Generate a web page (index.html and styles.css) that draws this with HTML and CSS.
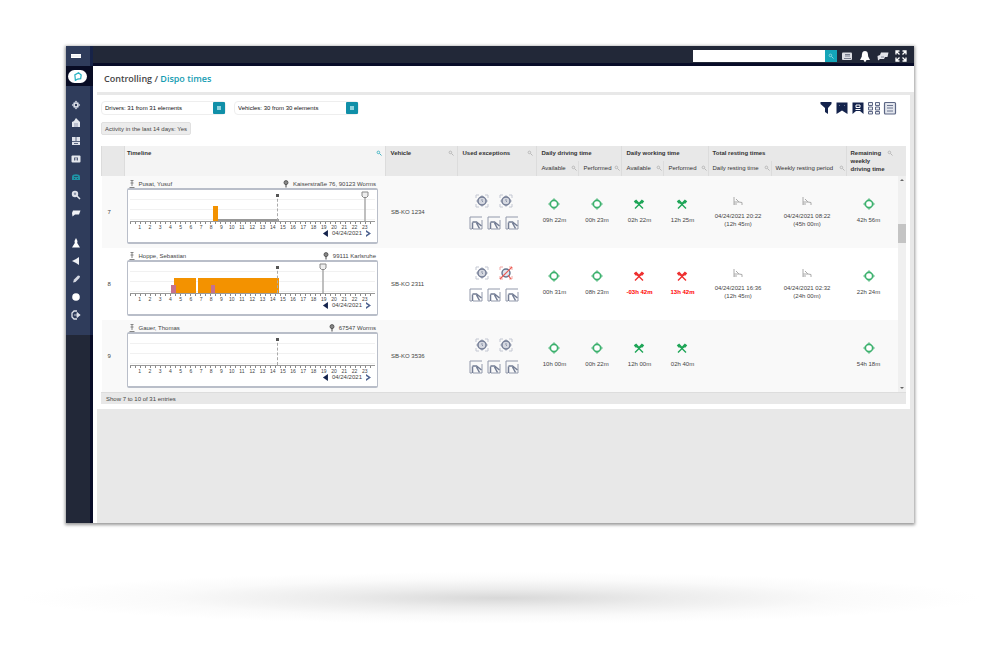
FILE: index.html
```html
<!DOCTYPE html>
<html lang="en">
<head>
<meta charset="utf-8">
<title>Controlling / Dispo times</title>
<link rel="stylesheet" href="styles.css">
</head>
<body>
<svg class="defs" aria-hidden="true">
  <symbol id="wheel" viewBox="0 0 12 12"><path d="M6 0 12 6 6 12 0 6Z" fill="currentColor" opacity=".6"/><circle cx="6" cy="6" r="3.5" fill="#fff" stroke="currentColor" stroke-width="1.4" stroke-opacity=".8"/></symbol>
  <symbol id="work" viewBox="0 0 12 12"><path d="M2 10.5 8.5 4M10 10.5 3.5 4" fill="none" stroke="currentColor" stroke-width="1.4"/><path d="M.8 3.2 3.2 1.6 6 4.4 8.800 1.600 11.200 3.200 9.600 5.400 7.600 5.600 6 7.400 4.400 5.600 2.400 5.400Z" fill="currentColor"/></symbol>
  <symbol id="bed" viewBox="0 0 12 10"><path d="M2 1v8M2 6h5M4 3l3 3 3 .5V9M2 8h3" fill="none" stroke="currentColor"/></symbol>
  <symbol id="exc" viewBox="0 0 14 14"><path d="M1 4V1h3M10 1h3v3M13 10v3h-3M4 13H1v-3" fill="none" stroke="#c3c7d2"/><path d="M7 1 13 7 7 13 1 7Z" fill="#b4bac8"/><circle cx="7" cy="7" r="4" fill="#d5d8e0" stroke="#757e96" stroke-width="1.4"/><path d="M7 5V7l1 1" fill="none" stroke="#8d95a9"/></symbol>
  <symbol id="excred" viewBox="0 0 14 14"><path d="M1 4V1h3M10 1h3v3M13 10v3h-3M4 13H1v-3" fill="none" stroke="#f2a9a5"/><circle cx="7" cy="7" r="4" fill="#dfe8f0" stroke="#66738c" stroke-width="1.4"/><path d="M1 13 13 1M9 9l3 4" stroke="#ed5a52" stroke-width="1.2"/></symbol>
  <symbol id="split" viewBox="0 0 14 14"><path d="M13 1H1v12h2M4 13h9V4" fill="none" stroke="#9299ab"/><path d="M3.5 13V6.500M3.500 6h4l5 4M7.500 7l3 5.500" fill="none" stroke="#737d94" stroke-width="1.500"/></symbol>
  <symbol id="search" viewBox="0 0 6 6"><circle cx="2.400" cy="2.400" r="1.300" fill="none" stroke="currentColor" stroke-width=".7"/><path d="M3.500 3.500 5.500 5.500" stroke="currentColor" stroke-width=".8"/></symbol>
  <symbol id="person" viewBox="0 0 6 8"><path d="M1.500.500h3M3 1v5M1.500 3h3M.500 7.500h5" fill="none" stroke="#777" stroke-width=".9"/></symbol>
  <symbol id="place" viewBox="0 0 6 8"><path d="M3 7.500V4" stroke="#444"/><circle cx="3" cy="2.600" r="2" fill="#888" stroke="#444" stroke-width=".8"/></symbol>
  <symbol id="flag" viewBox="0 0 8 30"><path d="M4 6v24" stroke="#aaa" stroke-width="1.500"/><path d="M1 1h6v4L5.500 6.500h-3L1 5Z" fill="#eee" stroke="#888"/></symbol>
</svg>

<div class="window">
  <nav class="side" aria-label="Main">
    <div class="side-main">
      <button class="menu" aria-label="Menu"><svg viewBox="0 0 10 6"><path d="M0 1h10v4H0z" fill="#fff"/><path d="M0 3h10" stroke="#ccd1dd" stroke-width=".6"/></svg></button>
      <a class="home" href="#" aria-label="Home"><svg viewBox="0 0 18 12"><path d="M7 9.500 6.500 4.500 10 2.500l2.500 2-.5 3.500L9 8.500Z" fill="none" stroke="#2bb3c4" stroke-width="1.200"/></svg></a>
      <div class="links">
        <a href="#" aria-label="Map"><svg viewBox="0 0 10 10"><path d="M5 .5 9.200 5 5 9.500.8 5Z" fill="#d8dce6"/><circle cx="5" cy="5" r="3" fill="#dfe2ea" stroke="#9aa3b8"/><circle cx="5" cy="5" r="1.200" fill="#2f3c5b"/></svg></a>
        <a href="#" aria-label="Depot"><svg viewBox="0 0 10 10"><path d="M5 0 8 3l1 1v5H1V4l2-1Z" fill="#e4e7ee"/><path d="M3 6h4M3 8h4" stroke="#7f89a2" stroke-width=".8"/></svg></a>
        <a href="#" aria-label="Dashboard"><svg viewBox="0 0 10 10"><path d="M1 1h8v8H1z" fill="#dfe2ea"/><path d="M1 5.500h8M5 1v4M3 7.500h4" stroke="#596580"/></svg></a>
        <a href="#" aria-label="Cards"><svg viewBox="0 0 10 10"><rect x=".5" y="1.500" width="9" height="7" rx="1" fill="#e4e7ee"/><path d="M3 3.500h4v3H3z" fill="#56617d"/><path d="M5 4v3" stroke="#fff"/></svg></a>
        <a class="active" href="#" aria-label="Controlling"><svg viewBox="0 0 10 10"><path d="M1 4.500C1 1.500 9 1.500 9 4.500V8H1Z" fill="currentColor"/><path d="M3 4.500h4M3 6.500h1M6 6.500h1" stroke="#2f3c5b" stroke-width=".8"/></svg></a>
        <a href="#" aria-label="Search"><svg viewBox="0 0 10 10"><circle cx="4" cy="4" r="3.200" fill="#dfe2ea"/><circle cx="4" cy="3.800" r="1.200" fill="#8b94aa"/><path d="m6 6 3 3" stroke="#e4e7ee" stroke-width="1.500"/></svg></a>
        <a href="#" aria-label="Messages"><svg viewBox="0 0 10 10"><path d="M2 2.500h7.500L8 6.500H4L1.500 8.500 1 5Z" fill="#f1f2f6"/></svg></a>
      </div>
      <div class="links">
        <a href="#" aria-label="Users"><svg viewBox="0 0 10 10"><path d="M5 0 6.500 3 6.200 5 9 9.500H1L3.800 5 3.500 3Z" fill="#fff"/></svg></a>
        <a href="#" aria-label="Announcements"><svg viewBox="0 0 10 10"><path d="M8 1v8L5 7 1 5l4-2Z" fill="#eef0f5"/></svg></a>
        <a href="#" aria-label="Tools"><svg viewBox="0 0 10 10"><path d="m2 8.500 1-3 4-4 2 .5-.5 2-4 4Z" fill="#d5d9e3"/></svg></a>
        <a href="#" aria-label="Help"><svg viewBox="0 0 10 10"><circle cx="5" cy="5" r="3.800" fill="#fff"/></svg></a>
        <a href="#" aria-label="Log out"><svg viewBox="0 0 10 10"><path d="M6 1H3L1 3v4l2 2h3" fill="none" stroke="#dfe2ea" stroke-width="1.300"/><path d="M3 5h4M6 2.500 9.200 5 6 7.500Z" fill="#dfe2ea" stroke="#dfe2ea" stroke-width=".8"/></svg></a>
      </div>
    </div>
  </nav>

  <div class="content">
    <header class="top">
      <form class="find"><input type="search" aria-label="Search"><button type="button" aria-label="Start search"><svg viewBox="0 0 6 6"><use href="#search"/></svg></button></form>
      <button aria-label="News"><svg viewBox="0 0 12 12"><rect x="1" y="2.500" width="10" height="7.500" rx="1" fill="#dcdee4"/><path d="M4 4.500h5M4 6h5M3 8.500h7" stroke="#777d8e"/></svg></button>
      <button aria-label="Notifications"><svg viewBox="0 0 12 12"><path d="M6 1c3 0 3 3 3.200 5.500L11 10H1l1.800-3.500C3 4 3 1 6 1Z" fill="#fff"/><circle cx="6" cy="10.500" r="1.200" fill="#fff"/></svg></button>
      <button aria-label="Messages"><svg viewBox="0 0 12 12"><path d="M4 2.500h7.500L10.500 7H8l-1 2H3L1 10.500.5 6 3 5Z" fill="#e3e5ea"/><path d="M4 7h3" stroke="#7c8294"/></svg></button>
      <button aria-label="Full screen"><svg viewBox="0 0 12 12"><path d="M1 4.500V1h3.500M7.500 1H11v3.500M11 7.500V11H7.500M4.500 11H1V7.500M1 1l3.500 3.500M11 1 7.500 4.500M11 11 7.500 7.500M1 11l3.500-3.500" fill="none" stroke="#fff" stroke-width="1.300"/></svg></button>
    </header>
    <main>
      <h1>Controlling / <a href="#">Dispo times</a></h1>
      <section class="card">
        <div class="tools">
          <div class="pick"><select aria-label="Drivers"><option>Drivers: 31 from 31 elements</option></select><span class="drop"></span></div>
          <div class="pick"><select aria-label="Vehicles"><option>Vehicles: 30 from 30 elements</option></select><span class="drop"></span></div>
          <div class="actions">
            <button aria-label="Filter"><svg viewBox="0 0 14 14"><path d="M1.500 1h11v2L9 7v6l-3-2V7L1.500 3Z" fill="#14234c"/></svg></button>
            <button aria-label="Saved filters"><svg viewBox="0 0 14 14"><path d="M1.500 1.500h11v11.500L7 9.500 1.500 13Z" fill="#14234c"/><path d="M4 4.500h1M9 4.500h1" stroke="#6d7691"/></svg></button>
            <button aria-label="Save filter"><svg viewBox="0 0 14 14"><path d="M1.500 1.500h11v11.500L9 10H5l-3.500 3Z" fill="#14234c"/><path d="M5 4h4v2.500H5zM4.500 8.500h5" fill="none" stroke="#fff"/></svg></button>
            <button aria-label="Columns"><svg viewBox="0 0 14 14"><path d="M1.500 1.500h4v3h-4zm7 0h4v3h-4zm-7 4.500h4v3h-4zm7 0h4v3h-4zm-7 4.500h4v2.500h-4zm7 0h4v2.500h-4z" fill="#e9ebf0" stroke="#5d6785"/></svg></button>
            <button aria-label="Export"><svg viewBox="0 0 14 14"><rect x="1.500" y="1.500" width="11" height="11.500" rx="1" fill="#e3e6ed" stroke="#5d6785" stroke-width="1.200"/><path d="M4 4.500h6M4 7h6M4 10h6" stroke="#6d7691"/></svg></button>
          </div>
        </div>
        <button class="chip">Activity in the last 14 days: Yes</button>

        <div class="grid">
          <table>
            <colgroup><col class="c-no"><col><col class="c-veh"><col class="c-exc"><col class="c-sm"><col class="c-md"><col class="c-sm"><col class="c-lg"><col class="c-rest"><col class="c-week"><col class="c-rem"></colgroup>
            <thead>
              <tr>
                <th rowspan="2"></th>
                <th rowspan="2" class="lead on"><span>Timeline</span><svg><use href="#search"/></svg></th>
                <th rowspan="2"><span>Vehicle</span><svg><use href="#search"/></svg></th>
                <th rowspan="2"><span>Used exceptions</span><svg><use href="#search"/></svg></th>
                <th colspan="2"><span>Daily driving time</span></th>
                <th colspan="2"><span>Daily working time</span></th>
                <th colspan="2"><span>Total resting times</span></th>
                <th rowspan="2" class="rem"><span>Remaining<br>weekly<br>driving time</span><svg><use href="#search"/></svg></th>
              </tr>
              <tr class="sub">
                <th><span>Available</span><svg><use href="#search"/></svg></th>
                <th><span>Performed</span><svg><use href="#search"/></svg></th>
                <th><span>Available</span><svg><use href="#search"/></svg></th>
                <th><span>Performed</span><svg><use href="#search"/></svg></th>
                <th><span>Daily resting time</span><svg><use href="#search"/></svg></th>
                <th><span>Weekly resting period</span><svg><use href="#search"/></svg></th>
              </tr>
            </thead>
            <tbody>
              <tr>
                <td class="no">7</td>
                <td class="line">
                  <div class="who"><svg><use href="#person"/></svg><span>Pusat, Yusuf</span><svg class="at"><use href="#place"/></svg><span>Kaiserstraße 76, 90123 Worms</span></div>
                  <div class="chart">
                    <div class="plot"><i class="drive" style="left:34%;width:2%"></i><i class="idle" style="left:36%;width:25%"></i><i class="now" style="left:60%"></i><svg class="flag" style="left:96%"><use href="#flag"/></svg></div>
                    <ol><li>1</li><li>2</li><li>3</li><li>4</li><li>5</li><li>6</li><li>7</li><li>8</li><li>9</li><li>10</li><li>11</li><li>12</li><li>13</li><li>14</li><li>15</li><li>16</li><li>17</li><li>18</li><li>19</li><li>20</li><li>21</li><li>22</li><li>23</li></ol>
                    <div class="day"><button class="prev" aria-label="Previous day"></button><span>04/24/2021</span><button class="next" aria-label="Next day"></button></div>
                  </div>
                </td>
                <td class="veh">SB-KO 1234</td>
                <td class="exc"><div><svg><use href="#exc"/></svg><svg><use href="#exc"/></svg></div><div class="three"><svg><use href="#split"/></svg><svg><use href="#split"/></svg><svg><use href="#split"/></svg></div></td>
                <td class="val ok"><svg><use href="#wheel"/></svg><span>09h 22m</span></td>
                <td class="val ok"><svg><use href="#wheel"/></svg><span>00h 23m</span></td>
                <td class="val ok"><svg><use href="#work"/></svg><span>02h 22m</span></td>
                <td class="val ok"><svg><use href="#work"/></svg><span>12h 25m</span></td>
                <td class="val rest"><svg><use href="#bed"/></svg><span>04/24/2021 20:22<br>(12h 45m)</span></td>
                <td class="val rest"><svg><use href="#bed"/></svg><span>04/24/2021 08:22<br>(45h 00m)</span></td>
                <td class="val ok last"><svg><use href="#wheel"/></svg><span>42h 56m</span></td>
              </tr>
              <tr>
                <td class="no">8</td>
                <td class="line">
                  <div class="who"><svg><use href="#person"/></svg><span>Hoppe, Sebastian</span><svg class="at"><use href="#place"/></svg><span>99111 Karlsruhe</span></div>
                  <div class="chart">
                    <div class="plot"><i class="pause" style="left:17%;width:2%"></i><i class="drive" style="left:18%;width:9%"></i><i class="drive" style="left:28%;width:33%"></i><i class="pause" style="left:33%;width:2%"></i><i class="now" style="left:60%"></i><svg class="flag" style="left:79%"><use href="#flag"/></svg></div>
                    <ol><li>1</li><li>2</li><li>3</li><li>4</li><li>5</li><li>6</li><li>7</li><li>8</li><li>9</li><li>10</li><li>11</li><li>12</li><li>13</li><li>14</li><li>15</li><li>16</li><li>17</li><li>18</li><li>19</li><li>20</li><li>21</li><li>22</li><li>23</li></ol>
                    <div class="day"><button class="prev" aria-label="Previous day"></button><span>04/24/2021</span><button class="next" aria-label="Next day"></button></div>
                  </div>
                </td>
                <td class="veh">SB-KO 2311</td>
                <td class="exc"><div><svg><use href="#exc"/></svg><svg><use href="#excred"/></svg></div><div class="three"><svg><use href="#split"/></svg><svg><use href="#split"/></svg><svg><use href="#split"/></svg></div></td>
                <td class="val ok"><svg><use href="#wheel"/></svg><span>00h 31m</span></td>
                <td class="val ok"><svg><use href="#wheel"/></svg><span>08h 23m</span></td>
                <td class="val bad"><svg><use href="#work"/></svg><span>-03h 42m</span></td>
                <td class="val bad"><svg><use href="#work"/></svg><span>13h 42m</span></td>
                <td class="val rest"><svg><use href="#bed"/></svg><span>04/24/2021 16:36<br>(12h 45m)</span></td>
                <td class="val rest"><svg><use href="#bed"/></svg><span>04/24/2021 02:32<br>(24h 00m)</span></td>
                <td class="val ok last"><svg><use href="#wheel"/></svg><span>22h 24m</span></td>
              </tr>
              <tr>
                <td class="no">9</td>
                <td class="line">
                  <div class="who"><svg><use href="#person"/></svg><span>Gauer, Thomas</span><svg class="at"><use href="#place"/></svg><span>67547 Worms</span></div>
                  <div class="chart">
                    <div class="plot"><i class="now" style="left:60%"></i></div>
                    <ol><li>1</li><li>2</li><li>3</li><li>4</li><li>5</li><li>6</li><li>7</li><li>8</li><li>9</li><li>10</li><li>11</li><li>12</li><li>13</li><li>14</li><li>15</li><li>16</li><li>17</li><li>18</li><li>19</li><li>20</li><li>21</li><li>22</li><li>23</li></ol>
                    <div class="day"><button class="prev" aria-label="Previous day"></button><span>04/24/2021</span><button class="next" aria-label="Next day"></button></div>
                  </div>
                </td>
                <td class="veh">SB-KO 3536</td>
                <td class="exc"><div><svg><use href="#exc"/></svg><svg><use href="#exc"/></svg></div><div class="three"><svg><use href="#split"/></svg><svg><use href="#split"/></svg><svg><use href="#split"/></svg></div></td>
                <td class="val ok"><svg><use href="#wheel"/></svg><span>10h 00m</span></td>
                <td class="val ok"><svg><use href="#wheel"/></svg><span>00h 22m</span></td>
                <td class="val ok"><svg><use href="#work"/></svg><span>12h 00m</span></td>
                <td class="val ok"><svg><use href="#work"/></svg><span>02h 40m</span></td>
                <td></td>
                <td></td>
                <td class="val ok last"><svg><use href="#wheel"/></svg><span>54h 18m</span></td>
              </tr>
            </tbody>
          </table>
          <div class="scroll"><i class="up"></i><i class="thumb"></i><i class="down"></i></div>
        </div>
        <footer>Show 7 to 10 of 31 entries</footer>
      </section>
    </main>
  </div>
</div>
<div class="ground"></div>
</body>
</html>
```
FILE: styles.css
```css
* { box-sizing: border-box; }
body { margin: 0; background: #fff; color: #444; font: 6px/8px "Liberation Sans", Arial, sans-serif; }
svg { display: block; }
a { color: inherit; text-decoration: none; }
button, select, input { font: inherit; color: inherit; border: 0; padding: 0; margin: 0; background: none; }
.defs { position: absolute; width: 0; height: 0; }

.window { display: flex; min-height: 477px; margin: 46px 86px 0 66px; background: #e8e8e8; box-shadow: 0 1px 3px 1px #999; }

.side { flex: 0 0 27px; min-width: 0; background: linear-gradient(90deg, #222838 24px, #080c28 24px); }
.side-main { height: 289px; background: linear-gradient(90deg, #2f3c5b 24px, #172348 24px); }
.menu { display: grid; place-items: center; width: 20px; height: 20px; }
.menu svg { width: 10px; height: 6px; }
.home { display: grid; place-items: center; width: 27px; height: 20px; padding-right: 4px; background: #080c24; }
.home svg { width: 19px; height: 13px; border-radius: 7px; background: #fff; }
.links { display: grid; grid-auto-rows: 18px; width: 20px; padding-top: 10px; }
.links + .links { padding-top: 12px; }
.links a { display: grid; place-items: center; }
.links svg { width: 10px; height: 10px; }
.links .active { color: #1f93a5; }

.content { display: flex; flex-direction: column; flex: 1; min-width: 0; }
.top { display: flex; align-items: center; justify-content: flex-end; gap: 6px; height: 20px; padding: 2px 7px 0; background: #222838; border-bottom: 3px solid #080c28; }
.top button svg { width: 12px; height: 12px; }
.find { display: flex; margin-right: -2px; }
.find input { width: 132px; height: 12px; background: #fff; }
.find button { display: grid; place-items: center; width: 12px; background: #14a5b8; color: #a5e2ea; }
.top .find svg { width: 6px; height: 6px; }

main { flex: 1; border-left: 4px solid #fff; }
h1 { margin: 0 0 3px; padding: 6px 7px; background: #fff; font: 600 9px/14px "Open Sans", sans-serif; color: #454545; }
h1 a { color: #169db3; }
.card { margin-right: 4px; padding: 6px 4px 5px; background: #fff; }

.tools { display: flex; align-items: center; gap: 8px; height: 14px; }
.pick { display: flex; width: 125px; height: 14px; border: 1px solid #eee; border-radius: 4px; }
.pick select { flex: 1; min-width: 0; padding-left: 3px; appearance: none; color: #111; }
.drop { display: grid; place-items: center; width: 12px; background: #108fa8; border-radius: 1px; }
.drop::after { content: ""; width: 4px; height: 4px; background: #8fd3de; }
.actions { display: flex; gap: 2px; margin-left: auto; padding-right: 9px; }
.actions svg { width: 14px; height: 14px; }
.chip { display: block; height: 13px; margin-top: 7px; padding: 0 3px; background: #ececec; border: 1px solid #e0e0e0; border-radius: 2px; }

.grid { position: relative; margin-top: 11px; }
table { width: 100%; table-layout: fixed; border-collapse: collapse; }
.c-no { width: 23px; }
.c-veh { width: 72px; }
.c-exc { width: 79px; }
.c-sm { width: 42px; }
.c-md { width: 43px; }
.c-lg { width: 44px; }
.c-rest { width: 63px; }
.c-week { width: 75px; }
.c-rem { width: 60px; }
th { position: relative; height: 15px; padding: 3px 4px 0; background: #e8e8e8; border-left: 1px solid #dcdcdc; text-align: left; vertical-align: top; white-space: nowrap; color: #333; }
th.lead { background: #f4f4f4; padding-left: 2px; }
th svg { position: absolute; top: 4px; right: 3px; width: 6px; height: 6px; color: #aaa; }
.sub th svg { right: 1px; }
th.on svg { color: #1aa5b8; }
th.rem svg { right: 13px; }
.sub th { font-weight: 400; }
td { height: 72px; padding: 0; vertical-align: top; }
tbody tr { background: #fff; }
tbody tr:nth-child(odd) { background: #f9f9f9; }
.no { padding: 0 0 0 6px; vertical-align: middle; }
.veh { padding: 0 5px; vertical-align: middle; }

.line { padding: 4px 8px 4px 2px; }
.who { display: flex; gap: 4px; padding: 0 2px; white-space: nowrap; }
.who svg { width: 6px; height: 8px; }
.who .at { margin-left: auto; }
.chart { height: 56px; border: 1px solid #b9bec9; border-width: 2px 1px; border-radius: 2px; background: #fff; padding: 0 2px; }
.plot { position: relative; height: 32px; border-bottom: 1px solid #999; background: repeating-linear-gradient(#fff 0 9px, #f1f1f1 9px 10px); }
.plot::after { content: ""; position: absolute; inset: 32px 0 auto; height: 2px; background: repeating-linear-gradient(90deg, #888 0 1px, transparent 1px 5px); }
.plot i { position: absolute; bottom: 0; }
.drive { height: 15px; background: #f39200; }
.plot .idle { height: 2px; background: #999; }
.pause { z-index: 1; height: 8px; background: #c5718e; }
.plot .now { height: 27px; border-left: 1px dashed #aaa; }
.now::before { content: ""; position: absolute; top: 0; left: -2px; width: 3px; height: 3px; background: #555; }
.plot .flag { position: absolute; bottom: 0; width: 8px; height: 30px; margin-left: -4px; }
.chart ol { display: flex; margin: 2px 5px 0; padding: 0; list-style: none; font-size: 5px; line-height: 6px; }
.chart li { flex: 1; min-width: 0; text-align: center; }
.day { display: flex; justify-content: flex-end; align-items: center; gap: 4px; padding-right: 4px; line-height: 7px; }
.day button { width: 5px; height: 7px; background: #14234c; clip-path: polygon(100% 0, 100% 100%, 0 50%); }
.day .next { background: #4d6290; clip-path: polygon(0 0, 100% 50%, 0 100%, 0 70%, 50% 50%, 0 30%); }

.exc { padding: 18px 6px 0 0; }
.exc div { display: flex; justify-content: center; gap: 10px; }
.exc .three { gap: 4px; margin-top: 8px; }
.exc svg { width: 14px; height: 14px; }
.val { padding: 22px 7px 0 0; text-align: center; white-space: nowrap; }
.val svg { width: 12px; height: 12px; margin: 0 auto 6px; }
.val span { display: block; }
.ok svg { color: #1ea557; }
.bad { color: #f00; font-weight: 700; }
.bad svg { color: #ee3030; }
.rest { padding: 20px 3px 0 0; }
.rest svg { height: 10px; color: #aaa; }
.last { padding-right: 15px; }

.scroll { position: absolute; inset: 30px 0 0 auto; width: 8px; background: #f0f0f0; }
.scroll i { position: absolute; left: 2px; border: 2px solid transparent; }
.scroll .up { top: 1px; border-bottom-color: #666; }
.scroll .down { bottom: 1px; border-top-color: #666; }
.scroll .thumb { inset: 48px 0 auto; height: 19px; border: 0; background: #c4c4c4; }
footer { height: 12px; padding: 2px 5px; background: #e8e8e8; border-top: 1px solid #ddd; }

.ground { height: 52px; margin: 49px 20px 0; background: radial-gradient(closest-side, #d8d8d8, #ececec 35%, #fafafa 70%, #fff); }
```
